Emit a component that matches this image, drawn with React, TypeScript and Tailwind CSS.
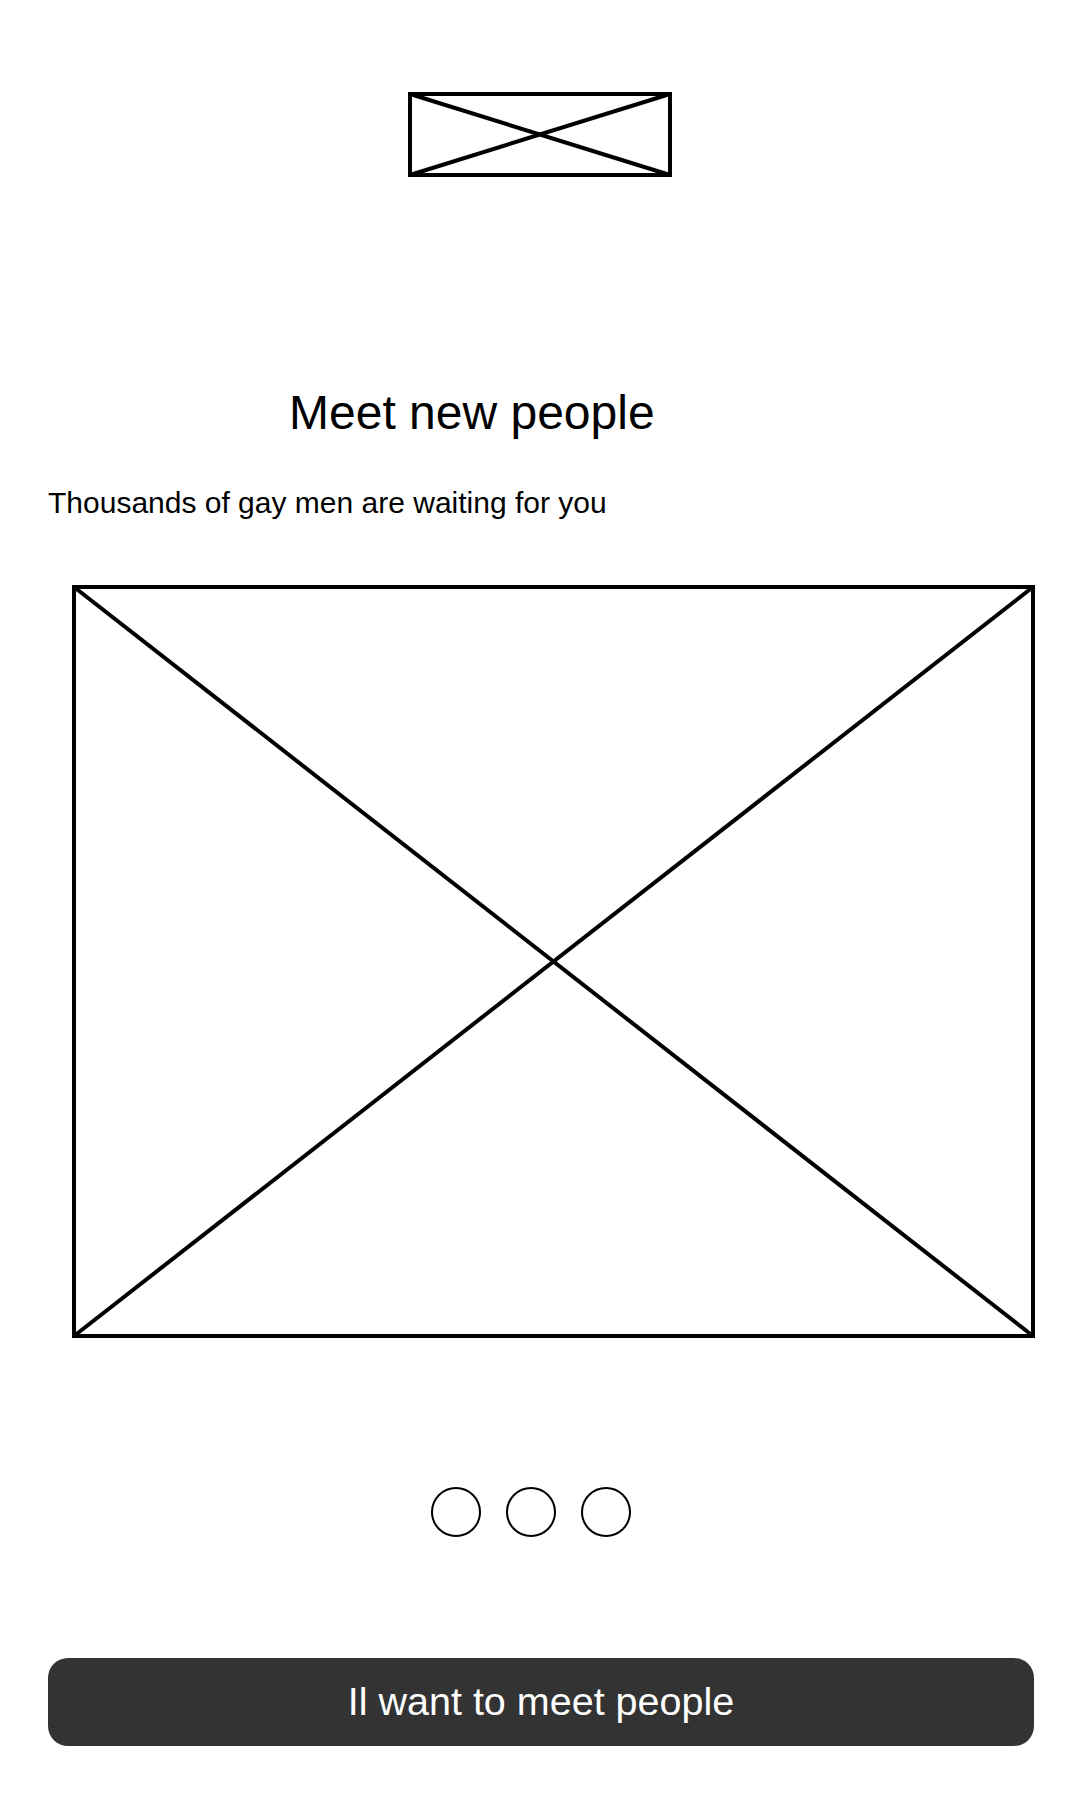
const Placeholder = ({ w, h, stroke }: { w: number; h: number; stroke: number }) => (
  <svg width={w} height={h} viewBox={`0 0 ${w} ${h}`} className="block">
    <rect x={stroke / 2} y={stroke / 2} width={w - stroke} height={h - stroke} fill="none" stroke="#000" strokeWidth={stroke} />
    <line x1={stroke / 2} y1={stroke / 2} x2={w - stroke / 2} y2={h - stroke / 2} stroke="#000" strokeWidth={stroke} />
    <line x1={stroke / 2} y1={h - stroke / 2} x2={w - stroke / 2} y2={stroke / 2} stroke="#000" strokeWidth={stroke} />
  </svg>
);

const App = () => {
  return (
    <div className="w-[1080px] h-[1800px] bg-white flex flex-col text-black font-['Liberation_Sans',Arial,sans-serif]">
      {/* logo */}
      <div className="pt-[92px] flex justify-center">
        <Placeholder w={264} h={85} stroke={4} />
      </div>

      <h1 className="mt-[212px] ml-[289px] text-[48px] leading-none font-normal">Meet new people</h1>
      <p className="mt-[51px] ml-[48px] text-[30px] leading-none">Thousands of gay men are waiting for you</p>

      {/* hero image */}
      <div className="mt-[67px] ml-[72px]">
        <Placeholder w={963} h={753} stroke={4} />
      </div>

      {/* pager dots */}
      <div className="mt-[149px] ml-[431px] flex gap-[25px]">
        <span className="w-[50px] h-[50px] rounded-full border-2 border-black" />
        <span className="w-[50px] h-[50px] rounded-full border-2 border-black" />
        <span className="w-[50px] h-[50px] rounded-full border-2 border-black" />
      </div>

      <button className="mt-[121px] ml-[48px] w-[986px] h-[88px] rounded-[20px] bg-[#333333] text-white text-[39.5px] leading-none flex items-center justify-center">
        Il want to meet people
      </button>
    </div>
  );
};

export default App;
